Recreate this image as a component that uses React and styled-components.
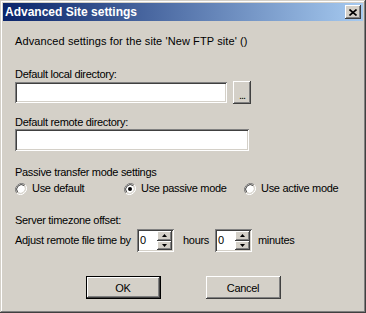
import React from 'react';
import styled, { createGlobalStyle } from 'styled-components';

const Global = createGlobalStyle`
  html, body { margin: 0; padding: 0; background: #D4D0C8; }
  body { font-family: "Liberation Sans", Arial, sans-serif; font-size: 11px; color: #000; letter-spacing: -0.3px; }
  * { box-sizing: border-box; }
`;

const sunken = `
  box-shadow: inset 1px 1px #808080, inset -1px -1px #ffffff, inset 2px 2px #404040, inset -2px -2px #D4D0C8;
`;
const raised = `
  box-shadow: inset -1px -1px #404040, inset 1px 1px #ffffff, inset -2px -2px #808080, inset 2px 2px #D4D0C8;
`;

const Window = styled.div`
  width: 366px;
  height: 313px;
  background: #D4D0C8;
  padding: 3px;
  box-shadow: inset -1px -1px #404040, inset 1px 1px #D4D0C8, inset -2px -2px #808080, inset 2px 2px #ffffff;
  display: flex;
  flex-direction: column;
`;

const TitleBar = styled.div`
  height: 18px;
  background: linear-gradient(to right, #0A246A, #A6CAF0);
  display: flex;
  align-items: center;
  justify-content: space-between;
  padding: 0 2px 0 2px;
`;

const TitleText = styled.span`
  color: #fff;
  font-weight: bold;
  font-size: 12px;
  font-family: "Liberation Sans", Arial, sans-serif;
  letter-spacing: 0;
`;

const CloseButton = styled.div`
  width: 16px;
  height: 14px;
  background: #D4D0C8;
  ${raised}
  display: flex;
  align-items: center;
  justify-content: center;
`;

const Content = styled.div`
  display: flex;
  flex-direction: column;
  padding: 0 0 0 12px;
`;

const Text = styled.div`
  line-height: 13px;
  height: 13px;
  white-space: nowrap;
  margin-top: ${(p) => p.$mt || 0}px;
  ${(p) => (p.$ls !== undefined ? `letter-spacing: ${p.$ls}px;` : '')}
`;

const Row = styled.div`
  display: flex;
  align-items: center;
  margin-top: ${(p) => p.$mt || 0}px;
`;

const Edit = styled.div`
  width: ${(p) => p.$w}px;
  height: ${(p) => p.$h}px;
  background: #fff;
  ${sunken}
`;

const BrowseButton = styled.div`
  width: 18px;
  height: 23px;
  margin: -1px 0 -1px 6px;
  background: #D4D0C8;
  ${raised}
  display: flex;
  align-items: center;
  justify-content: center;
  padding-top: 5px;
  font-size: 11px;
  letter-spacing: -1px;
`;

const RadioGrid = styled.div`
  display: grid;
  grid-template-columns: 109px 120px auto;
  margin-top: ${(p) => p.$mt || 0}px;
  height: 13px;
`;

const RadioItem = styled.div`
  display: flex;
  align-items: center;
  gap: 5px;
  line-height: 13px;
  white-space: nowrap;
`;

const Spinner = styled.div`
  width: 37px;
  height: 23px;
  background: #fff;
  ${sunken}
  padding: 2px;
  display: flex;
`;

const SpinText = styled.div`
  flex: 1;
  padding: 3px 0 0 1px;
  line-height: 13px;
`;

const SpinButtons = styled.div`
  width: 15px;
  display: flex;
  flex-direction: column;
`;

const SpinBtn = styled.div`
  flex: 1;
  background: #D4D0C8;
  ${raised}
  display: flex;
  align-items: center;
  justify-content: center;
`;

const Unit = styled.div`
  width: ${(p) => p.$w}px;
  padding-left: ${(p) => p.$pl}px;
  white-space: nowrap;
  line-height: 13px;
`;

const ButtonRow = styled.div`
  display: flex;
  justify-content: center;
  gap: 45px;
  margin-top: 24px;
  margin-left: -12px;
`;

const PushButton = styled.div`
  width: 75px;
  height: 23px;
  background: #D4D0C8;
  display: flex;
  align-items: center;
  justify-content: center;
  ${(p) =>
    p.$default
      ? `box-shadow: inset 0 0 0 1px #000, inset -2px -2px #404040, inset 2px 2px #ffffff, inset -3px -3px #808080;`
      : raised}
`;

function Radio({ checked }) {
  return (
    <svg width="12" height="12" viewBox="0 0 12 12">
      <path d="M10.2 1.8 A6 6 0 0 0 1.8 10.2" fill="none" stroke="#808080" strokeWidth="1" />
      <path d="M1.8 10.2 A6 6 0 0 0 10.2 1.8" fill="none" stroke="#ffffff" strokeWidth="1" />
      <circle cx="6" cy="6" r="4.6" fill="#fff" />
      <path d="M9.3 2.7 A4.7 4.7 0 0 0 2.7 9.3" fill="none" stroke="#404040" strokeWidth="1" />
      <path d="M2.7 9.3 A4.7 4.7 0 0 0 9.3 2.7" fill="none" stroke="#D4D0C8" strokeWidth="1" />
      {checked && <circle cx="6" cy="6" r="2" fill="#000" />}
    </svg>
  );
}

function Arrow({ up }) {
  return (
    <svg width="5" height="3" viewBox="0 0 5 3">
      <path d={up ? 'M2.5 0 L5 3 L0 3 Z' : 'M0 0 L5 0 L2.5 3 Z'} fill="#000" />
    </svg>
  );
}

function SpinBox() {
  return (
    <Spinner>
      <SpinText>0</SpinText>
      <SpinButtons>
        <SpinBtn><Arrow up /></SpinBtn>
        <SpinBtn><Arrow /></SpinBtn>
      </SpinButtons>
    </Spinner>
  );
}

export default function App() {
  return (
    <>
      <Global />
      <Window>
        <TitleBar>
          <TitleText>Advanced Site settings</TitleText>
          <CloseButton>
            <svg width="8" height="7" viewBox="0 0 8 7">
              <path d="M0.5 0.5 L7.5 6.5 M7.5 0.5 L0.5 6.5" stroke="#000" strokeWidth="1.6" />
            </svg>
          </CloseButton>
        </TitleBar>
        <Content>
          <Text $mt={14} $ls={0.1}>Advanced settings for the site 'New FTP site' ()</Text>
          <Text $mt={20}>Default local directory:</Text>
          <Row $mt={1}>
            <Edit $w={212} $h={21} />
            <BrowseButton>...</BrowseButton>
          </Row>
          <Text $mt={13}>Default remote directory:</Text>
          <Row>
            <Edit $w={234} $h={22} />
          </Row>
          <Text $mt={15}>Passive transfer mode settings</Text>
          <RadioGrid $mt={3}>
            <RadioItem><Radio />Use default</RadioItem>
            <RadioItem><Radio checked />Use passive mode</RadioItem>
            <RadioItem><Radio />Use active mode</RadioItem>
          </RadioGrid>
          <Text $mt={19}>Server timezone offset:</Text>
          <Row $mt={2}>
            <Unit $w={122} $pl={0}>Adjust remote file time by</Unit>
            <SpinBox />
            <Unit $w={41} $pl={9}>hours</Unit>
            <SpinBox />
            <Unit $w={60} $pl={6}>minutes</Unit>
          </Row>
          <ButtonRow>
            <PushButton $default>OK</PushButton>
            <PushButton>Cancel</PushButton>
          </ButtonRow>
        </Content>
      </Window>
    </>
  );
}
